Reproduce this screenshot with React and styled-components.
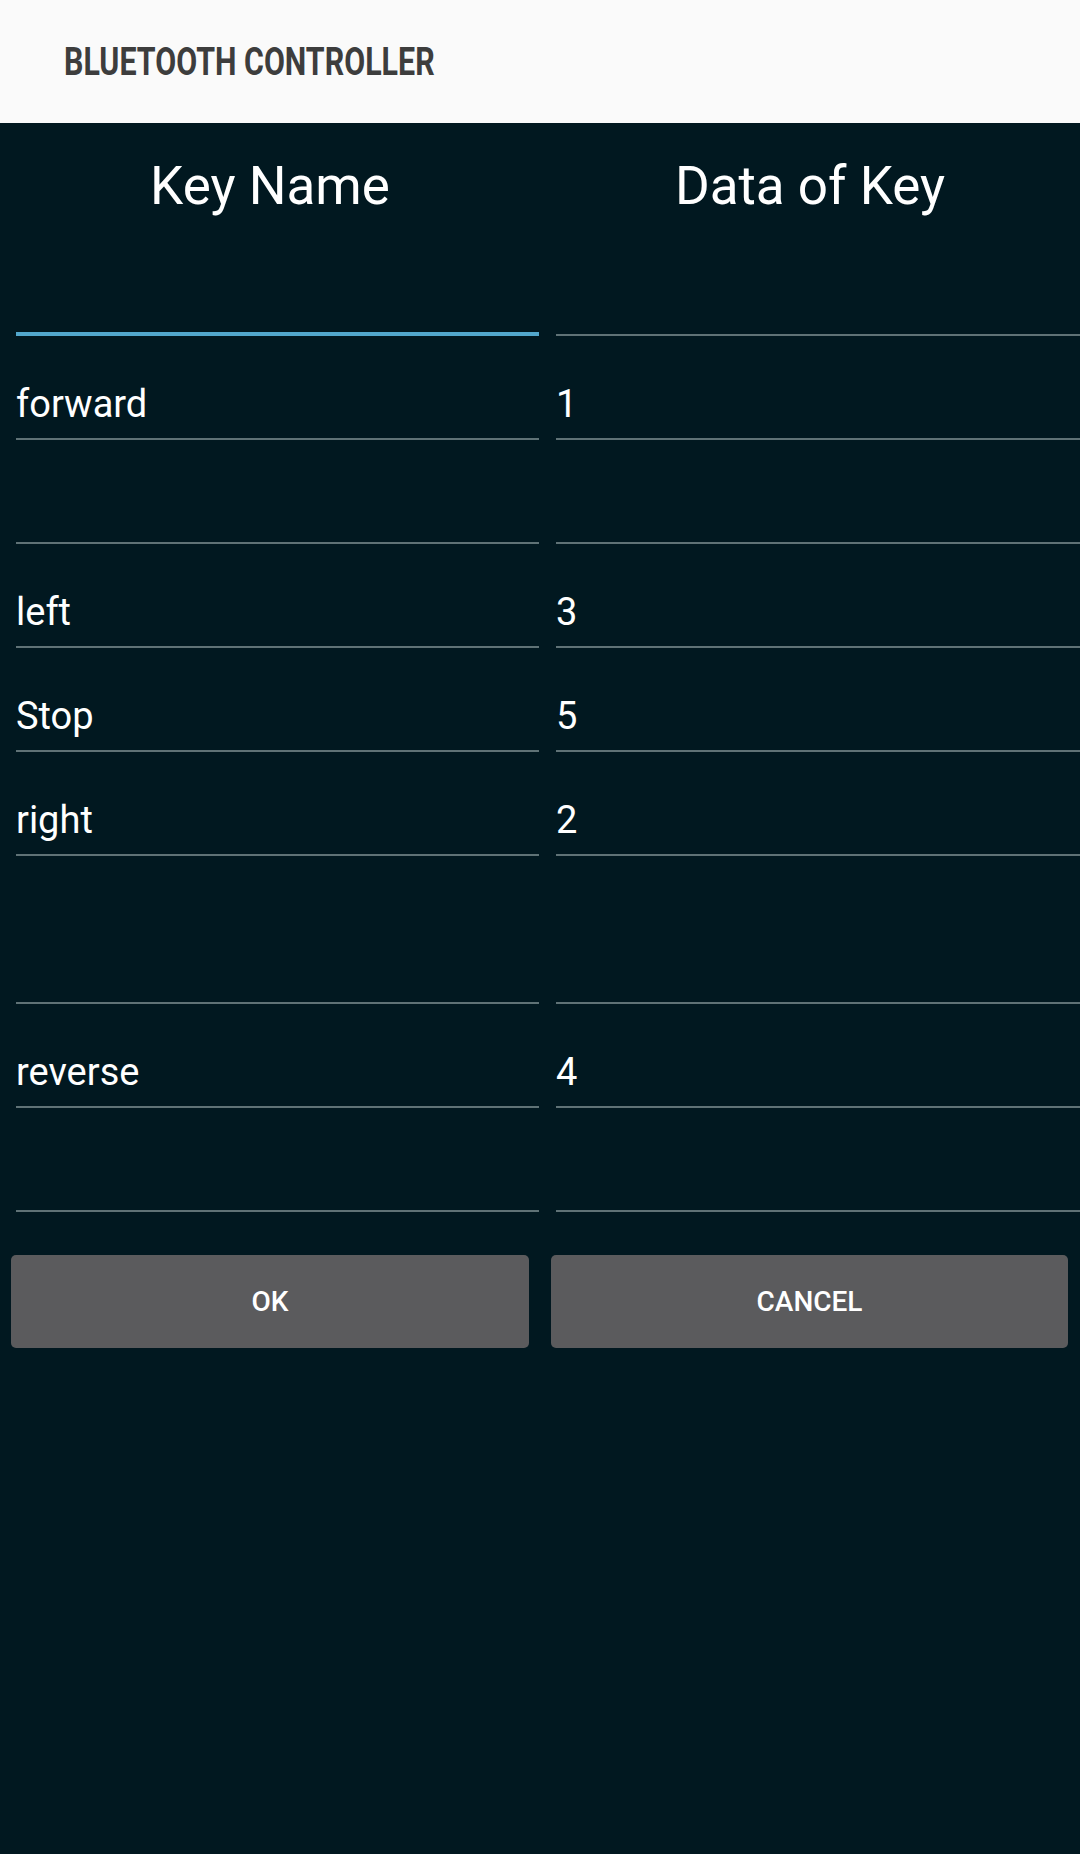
import React from "react";
import styled, { createGlobalStyle } from "styled-components";

const GlobalStyle = createGlobalStyle`
  html, body {
    margin: 0;
    padding: 0;
    background: #011820;
  }
  body {
    font-family: Roboto, "Noto Sans", "Liberation Sans", sans-serif;
  }
`;

const Screen = styled.div`
  width: 1080px;
  min-height: 1854px;
  background: #011820;
  display: flex;
  flex-direction: column;
  overflow: hidden;
`;

const AppBar = styled.header`
  height: 123px;
  background: #fafafa;
  display: flex;
  align-items: center;
  padding-left: 64px;
  box-sizing: border-box;
`;

const AppTitle = styled.h1`
  margin: 0;
  font-family: Roboto, sans-serif;
  font-weight: 700;
  font-size: 38px;
  color: #3d3d3d;
  display: inline-block;
  transform: scaleX(0.8);
  transform-origin: left center;
  white-space: nowrap;
`;

const ColumnHeads = styled.div`
  display: grid;
  grid-template-columns: 1fr 1fr;
  height: 109px;
  box-sizing: border-box;
  padding-top: 32px;
`;

const ColumnHead = styled.div`
  text-align: center;
  color: #ffffff;
  font-size: 53px;
  line-height: normal;
`;

const Fields = styled.div`
  display: grid;
  grid-template-columns: 523px 1fr;
  column-gap: 17px;
  padding-left: 16px;
`;

const Field = styled.div`
  height: ${(p) => p.$height || 104}px;
  box-sizing: border-box;
  display: flex;
  align-items: flex-end;
  padding-bottom: ${(p) => (p.$focused ? 10 : 12)}px;
  border-bottom: ${(p) => (p.$focused ? "4px solid #52a7cc" : "2px solid #5f7276")};
  color: #ffffff;
  font-size: 38px;
  line-height: normal;
`;

const Actions = styled.div`
  display: grid;
  grid-template-columns: 518px 517px;
  column-gap: 22px;
  padding: 43px 12px 0 11px;
`;

const ActionButton = styled.button`
  height: 93px;
  border: none;
  border-radius: 5px;
  background: #5b5b5d;
  color: #ffffff;
  font-family: Roboto, sans-serif;
  font-weight: 500;
  font-size: 28px;
  text-transform: uppercase;
  cursor: pointer;
`;

const rows = [
  { name: "", data: "", focused: true },
  { name: "forward", data: "1" },
  { name: "", data: "" },
  { name: "left", data: "3" },
  { name: "Stop", data: "5" },
  { name: "right", data: "2" },
  { name: "", data: "", height: 148 },
  { name: "reverse", data: "4" },
  { name: "", data: "" },
];

export default function App() {
  return (
    <>
      <GlobalStyle />
      <Screen>
        <AppBar>
          <AppTitle>BLUETOOTH CONTROLLER</AppTitle>
        </AppBar>
        <ColumnHeads>
          <ColumnHead>Key Name</ColumnHead>
          <ColumnHead>Data of Key</ColumnHead>
        </ColumnHeads>
        <Fields>
          {rows.map((r, i) => (
            <React.Fragment key={i}>
              <Field $focused={r.focused} $height={r.height}>{r.name}</Field>
              <Field $height={r.height}>{r.data}</Field>
            </React.Fragment>
          ))}
        </Fields>
        <Actions>
          <ActionButton>OK</ActionButton>
          <ActionButton>Cancel</ActionButton>
        </Actions>
      </Screen>
    </>
  );
}
